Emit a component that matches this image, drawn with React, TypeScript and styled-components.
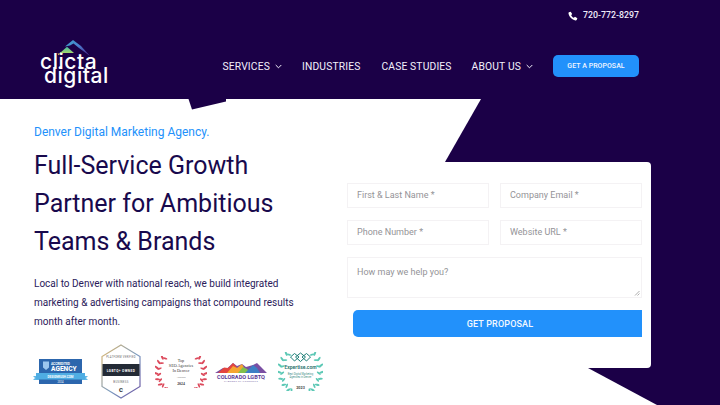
import React from "react";
import styled, { createGlobalStyle } from "styled-components";

const NAVY = "#1b0047";
const BLUE = "#2291fb";

const Global = createGlobalStyle`
  html, body { margin: 0; padding: 0; background: #fff; }
  * { box-sizing: border-box; }
  #root { width: 720px; height: 405px; overflow: hidden; font-family: Roboto, "Liberation Sans", sans-serif; }
`;

const Page = styled.div`
  width: 720px;
  height: 405px;
  display: flex;
  flex-direction: column;
  overflow: hidden;
`;

const Header = styled.header`
  height: 99px;
  flex: none;
  background: ${NAVY};
  display: flex;
  flex-direction: column;
  padding: 9px 81px 0 40px;
`;

const TopBar = styled.div`
  display: flex;
  justify-content: flex-end;
  align-items: center;
  gap: 5px;
  height: 13px;
  color: #f1edfa;
  font-size: 8.8px;
  font-weight: 500;
  line-height: 13px;
`;

const NavRow = styled.div`
  display: flex;
  align-items: flex-start;
  justify-content: space-between;
  margin-top: 4px;
`;

const Logo = styled.a`
  display: block;
  width: 69px;
  color: #fff;
  font-family: Inter, sans-serif;
  font-weight: 500;
  font-size: 21px;
  line-height: 14px;
  letter-spacing: 0.55px;
  position: relative;
  padding-top: 29px;
  white-space: nowrap;
`;

const LogoMark = styled.svg`
  position: absolute;
  left: 17px;
  top: 14px;
`;

const LogoIndent = styled.i`
  display: inline-block;
  width: 4px;
`;

const Nav = styled.nav`
  display: flex;
  align-items: center;
  margin-top: 29px;
`;

const NavItem = styled.a<{ $gap: number }>`
  display: flex;
  align-items: center;
  gap: 5px;
  margin-right: ${(p) => p.$gap}px;
  color: #f3f0fb;
  font-size: 10.3px;
  font-weight: 400;
  letter-spacing: 0.15px;
  white-space: nowrap;
`;

const ProposalLink = styled.a`
  width: 86px;
  height: 22px;
  border-radius: 5px;
  background: ${BLUE};
  color: #f3f6ff;
  font-size: 7px;
  font-weight: 500;
  letter-spacing: 0.05px;
  display: flex;
  align-items: center;
  justify-content: center;
`;

const Hero = styled.main`
  position: relative;
  flex: 1;
  display: flex;
  justify-content: space-between;
  background: #fff;
  padding: 0 69px 0 34px;
  min-height: 0;
`;

const Backdrop = styled.svg`
  position: absolute;
  left: 0;
  top: 0;
`;

const Intro = styled.section`
  position: relative;
  width: 300px;
  padding-top: 26px;
`;

const Eyebrow = styled.div`
  color: ${BLUE};
  font-size: 12px;
  line-height: 15px;
  white-space: nowrap;
`;

const Title = styled.h1`
  margin: 7px 0 0;
  color: #18094d;
  font-size: 25px;
  font-weight: 400;
  line-height: 38px;
  white-space: nowrap;
`;

const Lead = styled.p`
  margin: 13px 0 0;
  color: #2a1a5a;
  font-size: 10px;
  line-height: 19px;
  white-space: nowrap;
`;

const Badges = styled.div`
  display: flex;
  align-items: center;
  margin-top: 13px;
`;

const Badge = styled.svg<{ $gap: number }>`
  flex: none;
  margin-left: ${(p) => p.$gap}px;
`;

const Card = styled.form`
  position: relative;
  width: 306px;
  height: 206px;
  margin-top: 63px;
  background: #fff;
  border-radius: 4px 4px 4px 0;
  padding: 21px 9px 0 2px;
  display: flex;
  flex-direction: column;
`;

const FieldGrid = styled.div`
  display: grid;
  grid-template-columns: 142px 142px;
  column-gap: 11px;
  row-gap: 12.5px;
`;

const Field = styled.div<{ $wide?: boolean }>`
  grid-column: ${(p) => (p.$wide ? "1 / -1" : "auto")};
  height: ${(p) => (p.$wide ? 41 : 24.5)}px;
  border: 1px solid #f4f2f4;
  padding: ${(p) => (p.$wide ? "8px" : "0")} 9px 0;
  display: flex;
  align-items: ${(p) => (p.$wide ? "flex-start" : "center")};
  color: #949397;
  font-size: 9px;
  line-height: 12px;
  position: relative;
`;

const Grip = styled.svg`
  position: absolute;
  right: 1px;
  bottom: 1px;
`;

const Submit = styled.div`
  margin: 12px 0 0 6px;
  height: 27px;
  padding-left: 5px;
  background: ${BLUE};
  border-radius: 5px 0 0 5px;
  color: #f3f8ff;
  font-size: 9px;
  font-weight: 500;
  letter-spacing: 0.15px;
  display: flex;
  align-items: center;
  justify-content: center;
`;

const Chevron = () => (
  <svg width="7" height="5" viewBox="0 0 7 5" fill="none" stroke="#f3f0fb" strokeWidth="1">
    <path d="M0.7 1 L3.5 3.8 L6.3 1" />
  </svg>
);

const Phone = () => (
  <svg width="10" height="10" viewBox="0 0 24 24" fill="#fff">
    <path d="M6.6 1.5 L10 7.2 L7.6 10 C8.8 12.8 11.2 15.2 14 16.4 L16.8 14 L22.5 17.4 L20.8 21.8 C20.3 22.6 19 23 17.8 22.8 C9.6 21.2 2.8 14.4 1.2 6.2 C1 5 1.4 3.7 2.2 3.2 Z" />
  </svg>
);

/* A wreath branch: leaves set along an arc, mirrored for the right-hand side. */
const Laurel = ({ x, h, color, flip }: { x: number; h: number; color: string; flip?: boolean }) => {
  const R = h * 0.66;
  const cy = h / 2;
  const angles = [-52, -36, -20, -4, 12, 28, 44];
  return (
    <g transform={`translate(${x} 0) scale(${flip ? -1 : 1} 1)`} fill={color}>
      {angles.map((a) => {
        const t = (a * Math.PI) / 180;
        const px = R - R * Math.cos(t) + 2.5;
        const py = cy + R * Math.sin(t) * -1;
        return (
          <g key={a}>
            <ellipse cx={px - 1.2} cy={py} rx="2.6" ry="1" transform={`rotate(${a + 25} ${px - 1.2} ${py})`} />
            <ellipse cx={px + 1.6} cy={py + 1} rx="2.4" ry="0.9" transform={`rotate(${a - 30} ${px + 1.6} ${py + 1})`} />
          </g>
        );
      })}
    </g>
  );
};

const AccreditedBadge = () => (
  <Badge $gap={-1} width="55" height="26" viewBox="0 0 55 26">
    <rect x="6" y="0" width="43" height="25" fill="#2c66ad" />
    <path d="M0 17 H6 V21 H0 L2 19 Z M49 17 H55 L53 19 L55 21 H49 Z" fill="#62b8e6" />
    <rect x="3" y="14" width="49" height="6.5" fill="#4fade3" />
    <path d="M10 2.5 h6 v6 l-3 2.5 l-3 -2.5 z" fill="#9cc7ef" />
    <text x="18" y="5.5" fontSize="3.2" fontWeight="700" fill="#fff" fontFamily="Roboto">ACCREDITED</text>
    <text x="18" y="12" fontSize="6.6" fontWeight="800" fill="#fff" fontFamily="Roboto">AGENCY</text>
    <text x="27.5" y="18.6" fontSize="3" fontWeight="700" fill="#fff" textAnchor="middle" fontFamily="Roboto">DESIGNRUSH.COM</text>
    <text x="27.5" y="24" fontSize="2.6" fill="#fff" textAnchor="middle" fontFamily="Roboto">2024</text>
  </Badge>
);

const OwnedBadge = () => (
  <Badge $gap={13} width="40" height="55" viewBox="0 0 40 55">
    <defs>
      <linearGradient id="hexEdge" x1="0" y1="0" x2="1" y2="1">
        <stop offset="0" stopColor="#e2b96b" />
        <stop offset="0.55" stopColor="#7a9abf" />
        <stop offset="1" stopColor="#6a4ea0" />
      </linearGradient>
    </defs>
    <path d="M20 1 L39 12.5 V42.5 L20 54 L1 42.5 V12.5 Z" fill="#fff" stroke="url(#hexEdge)" strokeWidth="1.2" />
    <text x="20" y="14" fontSize="2.6" fill="#666" textAnchor="middle" letterSpacing=".3" fontFamily="Roboto">PLATFORM VERIFIED</text>
    <rect x="1.5" y="20" width="37" height="12" fill="#232a35" />
    <text x="20" y="27.5" fontSize="3.2" fontWeight="700" fill="#fff" textAnchor="middle" letterSpacing=".4" fontFamily="Roboto">LGBTQ+ OWNED</text>
    <text x="20" y="39" fontSize="2.8" fill="#666" textAnchor="middle" letterSpacing=".3" fontFamily="Roboto">BUSINESS</text>
    <text x="20" y="48" fontSize="6" fontWeight="900" fill="#333" textAnchor="middle" fontFamily="Roboto">C</text>
  </Badge>
);

const AwardBadge = () => (
  <Badge $gap={14} width="52" height="32" viewBox="0 0 52 32">
    <Laurel x={0} h={32} color="#dc4a5c" />
    <Laurel x={52} h={32} color="#dc4a5c" flip />
    <text x="26" y="6" fontSize="4.2" fill="#333" textAnchor="middle" fontFamily="Liberation Serif">Top</text>
    <text x="26" y="11" fontSize="4.2" fill="#333" textAnchor="middle" fontFamily="Liberation Serif">SEO Agencies</text>
    <text x="26" y="16" fontSize="4.2" fill="#333" textAnchor="middle" fontFamily="Liberation Serif">In Denver</text>
    <text x="26" y="22" fontSize="2.6" fill="#666" textAnchor="middle" fontFamily="Liberation Serif">Awarded</text>
    <text x="26" y="29" fontSize="3.8" fontWeight="700" fill="#333" textAnchor="middle" fontFamily="Liberation Serif">2024</text>
  </Badge>
);

const ColoradoBadge = () => (
  <Badge $gap={8} width="52" height="20" viewBox="0 0 52 20">
    <path d="M0 11 L8 6 L12 6.5 L18 1 L22 4 L27 2 L31 5 L38 3 L42 1 L46 5 L52 11 Z" fill="#7a4fa3" />
    <path d="M3 11 L9 5.5 L13 6 L18 1 L21 4 L24 11 Z" fill="#e3453f" />
    <path d="M12 11 L18 4 L22 6 L27 2 L32 11 Z" fill="#f5a531" />
    <path d="M23 11 L28 5 L32 7 L36 11 Z" fill="#7fc04c" />
    <path d="M30 11 L38 3 L42 6 L45 11 Z" fill="#3d7fc4" />
    <text x="26" y="16.5" fontSize="5.6" fontWeight="700" fill="#5b3b97" textAnchor="middle" fontFamily="Roboto">COLORADO LGBTQ</text>
    <text x="26" y="20" fontSize="2.4" fill="#8a7bb0" textAnchor="middle" letterSpacing=".3" fontFamily="Roboto">CHAMBER OF COMMERCE</text>
  </Badge>
);

const ExpertiseBadge = () => (
  <Badge $gap={11} width="45" height="39" viewBox="0 0 45 39">
    <Laurel x={0} h={37} color="#5cc8b5" />
    <Laurel x={45} h={37} color="#5cc8b5" flip />
    <path d="M22.5 1 L27.5 5 L22.5 9.5 L17.5 5 Z M16.5 1.5 L21 5 L16.5 9 L12.5 5 Z M28.5 1.5 L32.5 5 L28.5 9 L24 5 Z" fill="none" stroke="#1f7f78" strokeWidth="1" />
    <text x="22.5" y="16.5" fontSize="5" fontWeight="600" fill="#1f6f6a" textAnchor="middle" fontFamily="Roboto">Expertise.com</text>
    <text x="22.5" y="22.5" fontSize="2.6" fill="#3f8f88" textAnchor="middle" fontFamily="Roboto">Best Digital Marketing</text>
    <text x="22.5" y="26" fontSize="2.6" fill="#3f8f88" textAnchor="middle" fontFamily="Roboto">Agencies in Denver</text>
    <text x="22.5" y="37" fontSize="3.8" fontWeight="700" fill="#4a4a4a" textAnchor="middle" fontFamily="Roboto">2023</text>
  </Badge>
);

export default function App() {
  return (
    <Page>
      <Global />
      <Header>
        <TopBar>
          <Phone />
          720-772-8297
        </TopBar>
        <NavRow>
          <Logo>
            <LogoMark width="34" height="17" viewBox="0 0 34 17">
              <defs>
                <linearGradient id="peak" x1="0" y1="0" x2="1" y2="0.6">
                  <stop offset="0" stopColor="#3ba2c9" />
                  <stop offset="0.55" stopColor="#4a7fd0" />
                  <stop offset="1" stopColor="#4b3a9a" />
                </linearGradient>
                <linearGradient id="hill" x1="0" y1="0" x2="0" y2="1">
                  <stop offset="0" stopColor="#43b8a5" />
                  <stop offset="1" stopColor="#a6d86c" />
                </linearGradient>
              </defs>
              <path d="M16 0 L8 6.5 L13 5.5 L16.5 3.5 L22 8 L33 16 L24 6 Z" fill="url(#peak)" />
              <path d="M10 6.8 L3 13 H17 Z" fill="url(#hill)" />
              <path d="M0.5 13.6 L3.5 13.6 L1.5 15.2 Z" fill="#e8b94a" />
            </LogoMark>
            clicta
            <br />
            <LogoIndent />
            digital
          </Logo>
          <Nav>
            <NavItem $gap={20}>SERVICES <Chevron /></NavItem>
            <NavItem $gap={21}>INDUSTRIES</NavItem>
            <NavItem $gap={20}>CASE STUDIES</NavItem>
            <NavItem $gap={20}>ABOUT US <Chevron /></NavItem>
            <ProposalLink>GET A PROPOSAL</ProposalLink>
          </Nav>
        </NavRow>
      </Header>
      <Hero>
        <Backdrop width="720" height="306" viewBox="0 0 720 306">
          <path d="M481 0 H720 V306 H657 L588 269 L445 63 Z" fill={NAVY} />
          <path d="M188.5 0 H226 V2.5 L192 10.5 Z" fill={NAVY} />
        </Backdrop>
        <Intro>
          <Eyebrow>Denver Digital Marketing Agency.</Eyebrow>
          <Title>
            Full-Service Growth
            <br />
            Partner for Ambitious
            <br />
            Teams &amp; Brands
          </Title>
          <Lead>
            Local to Denver with national reach, we build integrated
            <br />
            marketing &amp; advertising campaigns that compound results
            <br />
            month after month.
          </Lead>
          <Badges>
            <AccreditedBadge />
            <OwnedBadge />
            <AwardBadge />
            <ColoradoBadge />
            <ExpertiseBadge />
          </Badges>
        </Intro>
        <Card>
          <FieldGrid>
            <Field>First &amp; Last Name *</Field>
            <Field>Company Email *</Field>
            <Field>Phone Number *</Field>
            <Field>Website URL *</Field>
            <Field $wide>
              How may we help you?
              <Grip width="6" height="6" viewBox="0 0 6 6" stroke="#8a8a8a" strokeWidth=".7">
                <path d="M1 5.5 L5.5 1 M3.5 5.5 L5.5 3.5" />
              </Grip>
            </Field>
          </FieldGrid>
          <Submit>GET PROPOSAL</Submit>
        </Card>
      </Hero>
    </Page>
  );
}
